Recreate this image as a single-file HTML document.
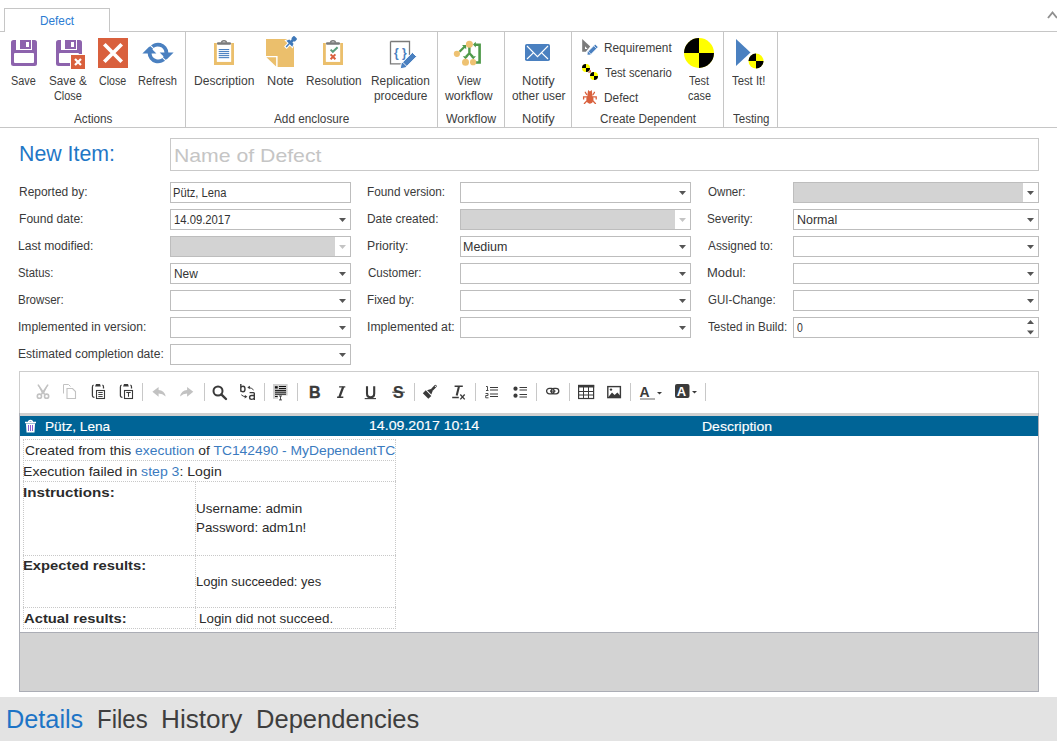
<!DOCTYPE html>
<html><head><meta charset="utf-8"><style>
*{margin:0;padding:0;box-sizing:border-box}
html,body{width:1057px;height:741px;overflow:hidden;background:#fff;font-family:"Liberation Sans",sans-serif;color:#3b3b3b}
.a{position:absolute}
.t{position:absolute;white-space:nowrap;font-size:12px;line-height:12px;color:#3d3d3d}
.hl{position:absolute;height:1px;background:#c6c6c6}
.vl{position:absolute;width:1px;background:#c6c6c6}
.inp{position:absolute;height:21px;border:1px solid #bdbdbd;background:#fff}
.lbl{position:absolute;white-space:nowrap;font-size:12px;line-height:12px;color:#3a3a3a}
.val{position:absolute;white-space:nowrap;font-size:12px;line-height:12px;color:#333}
svg{position:absolute;overflow:visible}
</style></head><body>
<div class="hl" style="left:0;top:31px;width:5px"></div>
<div class="hl" style="left:109px;top:31px;width:948px"></div>
<div class="a" style="left:4px;top:8px;width:106px;height:24px;border:1px solid #c6c6c6;border-bottom:none;background:#fff"></div>
<div class="t" style="left:39.92px;top:14.54px;font-size:12px;line-height:12px;color:#2b7cd3;transform:scaleX(0.9824);transform-origin:0 0;">Defect</div>
<svg style="left:1046px;top:9px" width="11" height="11" viewBox="0 0 11 11"><path d="M2 9 L6.5 3.5 L11 9" fill="none" stroke="#909090" stroke-width="1.9"/></svg>
<div class="hl" style="left:0;top:127px;width:1057px"></div>
<div class="vl" style="left:185px;top:32px;height:95px"></div>
<div class="vl" style="left:437px;top:32px;height:95px"></div>
<div class="vl" style="left:504px;top:32px;height:95px"></div>
<div class="vl" style="left:571px;top:32px;height:95px"></div>
<div class="vl" style="left:723px;top:32px;height:95px"></div>
<div class="vl" style="left:777px;top:32px;height:95px"></div>
<div class="t" style="left:11.49px;top:74.84px;font-size:12px;line-height:12px;transform:scaleX(0.9077);transform-origin:0 0;">Save</div>
<div class="t" style="left:49.03px;top:74.84px;font-size:12px;line-height:12px;transform:scaleX(0.9737);transform-origin:0 0;">Save &amp;</div>
<div class="t" style="left:54.30px;top:89.84px;font-size:12px;line-height:12px;transform:scaleX(0.9065);transform-origin:0 0;">Close</div>
<div class="t" style="left:99.20px;top:74.84px;font-size:12px;line-height:12px;transform:scaleX(0.8871);transform-origin:0 0;">Close</div>
<div class="t" style="left:138.38px;top:74.84px;font-size:12px;line-height:12px;transform:scaleX(0.9244);transform-origin:0 0;">Refresh</div>
<div class="t" style="left:74.00px;top:112.84px;font-size:12px;line-height:12px;transform:scaleX(0.9744);transform-origin:0 0;">Actions</div>
<div class="t" style="left:193.59px;top:74.84px;font-size:12px;line-height:12px;transform:scaleX(1.0068);transform-origin:0 0;">Description</div>
<div class="t" style="left:266.54px;top:74.84px;font-size:12px;line-height:12px;transform:scaleX(1.0583);transform-origin:0 0;">Note</div>
<div class="t" style="left:306.02px;top:74.84px;font-size:12px;line-height:12px;transform:scaleX(0.9818);transform-origin:0 0;">Resolution</div>
<div class="t" style="left:370.61px;top:74.84px;font-size:12px;line-height:12px;transform:scaleX(0.9897);transform-origin:0 0;">Replication</div>
<div class="t" style="left:373.60px;top:89.84px;font-size:12px;line-height:12px;transform:scaleX(0.9889);transform-origin:0 0;">procedure</div>
<div class="t" style="left:274.40px;top:112.84px;font-size:12px;line-height:12px;transform:scaleX(0.9818);transform-origin:0 0;">Add enclosure</div>
<div class="t" style="left:457.00px;top:74.84px;font-size:12px;line-height:12px;transform:scaleX(0.9231);transform-origin:0 0;">View</div>
<div class="t" style="left:445.00px;top:89.84px;font-size:12px;line-height:12px;transform:scaleX(1.0213);transform-origin:0 0;">workflow</div>
<div class="t" style="left:446.00px;top:112.84px;font-size:12px;line-height:12px;transform:scaleX(1.0204);transform-origin:0 0;">Workflow</div>
<div class="t" style="left:521.93px;top:74.84px;font-size:12px;line-height:12px;transform:scaleX(1.0667);transform-origin:0 0;">Notify</div>
<div class="t" style="left:512.00px;top:89.84px;font-size:12px;line-height:12px;transform:scaleX(0.9907);transform-origin:0 0;">other user</div>
<div class="t" style="left:521.93px;top:112.84px;font-size:12px;line-height:12px;transform:scaleX(1.0667);transform-origin:0 0;">Notify</div>
<div class="t" style="left:604.01px;top:41.84px;font-size:12px;line-height:12px;transform:scaleX(0.9853);transform-origin:0 0;">Requirement</div>
<div class="t" style="left:605.00px;top:66.84px;font-size:12px;line-height:12px;transform:scaleX(0.9437);transform-origin:0 0;">Test scenario</div>
<div class="t" style="left:604.01px;top:91.84px;font-size:12px;line-height:12px;transform:scaleX(0.9882);transform-origin:0 0;">Defect</div>
<div class="t" style="left:689.00px;top:74.84px;font-size:12px;line-height:12px;transform:scaleX(0.9091);transform-origin:0 0;">Test</div>
<div class="t" style="left:688.00px;top:89.84px;font-size:12px;line-height:12px;transform:scaleX(0.9040);transform-origin:0 0;">case</div>
<div class="t" style="left:600.00px;top:112.84px;font-size:12px;line-height:12px;transform:scaleX(0.9796);transform-origin:0 0;">Create Dependent</div>
<div class="t" style="left:732.00px;top:74.84px;font-size:12px;line-height:12px;transform:scaleX(0.9429);transform-origin:0 0;">Test It!</div>
<div class="t" style="left:732.60px;top:112.84px;font-size:12px;line-height:12px;transform:scaleX(0.9579);transform-origin:0 0;">Testing</div>
<svg style="left:11px;top:40px" width="26" height="26" viewBox="0 0 26 26"><rect x="0" y="0" width="26" height="26" rx="2.5" fill="#8d63ad"/><rect x="5" y="0" width="16" height="10" fill="#fff"/><rect x="9" y="0" width="11" height="9" fill="#8d63ad"/><rect x="15" y="2" width="3" height="5" fill="#fff"/><rect x="3" y="13" width="20" height="10" rx="1" fill="#fff"/></svg>
<svg style="left:56px;top:40px" width="30" height="30" viewBox="0 0 30 30"><rect x="0" y="0" width="26" height="26" rx="2.5" fill="#8d63ad"/><rect x="5" y="0" width="16" height="10" fill="#fff"/><rect x="9" y="0" width="11" height="9" fill="#8d63ad"/><rect x="15" y="2" width="3" height="5" fill="#fff"/><rect x="3" y="13" width="20" height="10" rx="1" fill="#fff"/><rect x="14" y="14" width="16" height="16" fill="#fff"/><rect x="15" y="15" width="14" height="14" fill="#d9603d"/><path d="M19 19 L25 25 M25 19 L19 25" stroke="#fff" stroke-width="2.2"/></svg>
<svg style="left:98px;top:38px" width="30" height="30" viewBox="0 0 30 30"><rect width="30" height="30" fill="#d9603d"/><path d="M6.3 6.3 L23.7 23.7 M23.7 6.3 L6.3 23.7" stroke="#fff" stroke-width="3.7"/></svg>
<svg style="left:140px;top:40px" width="36" height="26" viewBox="0 0 36 26"><path d="M10.73 8.80 A8.4 8.4 0 0 1 26.40 13.00" fill="none" stroke="#4a80c0" stroke-width="3.9"/><path d="M25.27 17.20 A8.4 8.4 0 0 1 9.60 13.00" fill="none" stroke="#4a80c0" stroke-width="3.9"/><path d="M19.7 12.6 L33.6 12.6 L26.6 19.6 Z" fill="#4a80c0"/><path d="M2.4 13.4 L16.4 13.4 L9.4 6.5 Z" fill="#4a80c0"/><path d="M15.17 10.17 L8.81 3.81 M20.83 15.83 L27.19 22.19" stroke="#fff" stroke-width="1.1"/></svg>
<svg style="left:214px;top:40px" width="20" height="26" viewBox="0 0 20 26"><path d="M0 3 H2.9 V21.7 H17.1 V3 H20 V25 H0 Z" fill="#ebbf6c"/><rect x="2.9" y="3" width="14.2" height="18.7" fill="#fff"/><rect x="3" y="2.2" width="14" height="2.6" rx="1.1" fill="#7b7b7b"/><path d="M7.6 2.8 Q7.6 0.7 10 0.7 Q12.4 0.7 12.4 2.8" fill="none" stroke="#7b7b7b" stroke-width="1.5"/><rect x="4.7" y="9.00" width="10.5" height="1.1" fill="#4a80c0"/><rect x="4.7" y="11.02" width="10.5" height="1.1" fill="#4a80c0"/><rect x="4.7" y="13.04" width="10.5" height="1.1" fill="#4a80c0"/><rect x="4.7" y="15.06" width="10.5" height="1.1" fill="#4a80c0"/><rect x="4.7" y="17.08" width="10.5" height="1.1" fill="#4a80c0"/></svg>
<svg style="left:262px;top:34px" width="38" height="36" viewBox="0 0 38 36"><path d="M4 5 H32 V33 H15.6 V22 H4 Z" fill="#ebbf6c"/><path d="M4.4 23.3 H14.1 V32.6 Z" fill="#ebbf6c"/><g transform="rotate(45 28 9)"><rect x="25.6" y="1" width="4.8" height="4" rx="1" fill="#fff" stroke="#fff" stroke-width="2.2"/><rect x="26.6" y="4.5" width="2.8" height="3" fill="#fff" stroke="#fff" stroke-width="2.2"/><path d="M23.8 10 L25 7 H31 L32.2 10 Z" fill="#fff" stroke="#fff" stroke-width="2.2"/><rect x="27.3" y="9.5" width="1.4" height="5" fill="#fff" stroke="#fff" stroke-width="2.2"/></g><g transform="rotate(45 28 9)"><rect x="25.6" y="1" width="4.8" height="4" rx="1" fill="#3f78b8" stroke="none" stroke-width="0"/><rect x="26.6" y="4.5" width="2.8" height="3" fill="#3f78b8" stroke="none" stroke-width="0"/><path d="M23.8 10 L25 7 H31 L32.2 10 Z" fill="#3f78b8" stroke="none" stroke-width="0"/><rect x="27.3" y="9.5" width="1.4" height="5" fill="#3f78b8" stroke="none" stroke-width="0"/></g></svg>
<svg style="left:323px;top:40px" width="20" height="26" viewBox="0 0 20 26"><path d="M0 3 H2.9 V21.7 H17.1 V3 H20 V25 H0 Z" fill="#ebbf6c"/><rect x="2.9" y="3" width="14.2" height="18.7" fill="#fff"/><rect x="3" y="2.2" width="14" height="2.6" rx="1.1" fill="#7b7b7b"/><path d="M7.6 2.8 Q7.6 0.7 10 0.7 Q12.4 0.7 12.4 2.8" fill="none" stroke="#7b7b7b" stroke-width="1.5"/><path d="M7.6 9.6 L9.8 11.8 L14.6 7.2" fill="none" stroke="#5a9e7c" stroke-width="2"/><path d="M7.6 14.4 L12.4 19.2 M12.4 14.4 L7.6 19.2" stroke="#d9603d" stroke-width="2"/></svg>
<svg style="left:389px;top:40px" width="28" height="30" viewBox="0 0 28 30"><path d="M1.5 1.5 H20.5 V15 M12 23.8 H1.5 V1.5" fill="none" stroke="#7a7a7a" stroke-width="1.3"/><text x="5" y="17" font-family="Liberation Sans" font-weight="bold" font-size="12" fill="#4a80c0">{ }</text><path d="M11.2 28.8 L12.2 23.6 L23.4 12.4 L27.6 16.6 L16.4 27.8 Z" fill="#4a80c0" stroke="#fff" stroke-width="1"/><path d="M13.6 22.2 L17.8 26.4" stroke="#fff" stroke-width="0.9"/></svg>
<svg style="left:450px;top:37px" width="36" height="32" viewBox="0 0 36 32"><path d="M9.5 14.8 L15 9.3" stroke="#4f9a4a" stroke-width="2.3"/><path d="M12 8.1 L16.2 8.1 L16.2 12.2 Z" fill="#4f9a4a"/><path d="M19.4 10 V16.5 M19.4 16.2 L16 19.8 M19.4 16.2 L22.8 19.8" stroke="#4f9a4a" stroke-width="2.4" fill="none"/><path d="M12.8 19.3 L18.3 19.3 L15.5 22.2 Z M20.5 19.3 L26 19.3 L23.2 22.2 Z" fill="#4f9a4a"/><path d="M25.5 25.5 H29.6 V7.8 H24.5" fill="none" stroke="#4f9a4a" stroke-width="2.6"/><path d="M23 7.6 L25.8 4.8 L25.8 10.4 Z" fill="#4f9a4a"/><circle cx="6.9" cy="16.8" r="3.1" fill="#eec272"/><circle cx="19.4" cy="7.3" r="3.5" fill="#eec272"/><circle cx="15.5" cy="25.2" r="3.5" fill="#eec272"/><circle cx="23.1" cy="25.2" r="3.1" fill="#eec272"/></svg>
<svg style="left:525px;top:44px" width="25" height="17" viewBox="0 0 25 17"><rect width="25" height="17" rx="1.8" fill="#4a80c0"/><path d="M2 2 L12.5 12.6 L23 2 M2 15 L8.6 8.6 M23 15 L16.4 8.6" fill="none" stroke="#fff" stroke-width="1.15"/></svg>
<svg style="left:578px;top:36px" width="24" height="22" viewBox="0 0 24 22"><path d="M4.2 3 L12.2 10.4 L7.8 15.7 H4.2 Z" fill="#7b7b7b"/><path d="M7 10.3 L9.6 13 H7 Z" fill="#fff"/><path d="M9.1 19.1 L9.4 16.1 L17.3 8.2 L20.2 11.1 L12.3 19 Z" fill="#4a80c0" stroke="#fff" stroke-width="0.7"/><path d="M15.8 9.8 L18.6 12.6 M10.2 15.4 L13 18.2" stroke="#fff" stroke-width="0.7"/></svg>
<svg style="left:580px;top:62px" width="20" height="20" viewBox="0 0 20 20"><circle cx="6" cy="6" r="4.9" fill="#fff"/><circle cx="14" cy="14" r="4.9" fill="#fff"/><circle cx="6" cy="6" r="4" fill="#ffff00"/><path d="M6 6 V2 A4 4 0 0 0 2 6 Z" fill="#000"/><path d="M6 6 V10 A4 4 0 0 0 10 6 Z" fill="#000"/><path d="M7.8 10.8 L11 7.8 L11 10.6 Z" fill="#d9603d"/><circle cx="14" cy="14" r="4" fill="#ffff00"/><path d="M14 14 V10 A4 4 0 0 0 10 14 Z" fill="#000"/><path d="M14 14 V18 A4 4 0 0 0 18 14 Z" fill="#000"/></svg>
<svg style="left:578px;top:86px" width="24" height="22" viewBox="0 0 24 22"><ellipse cx="11.9" cy="13.1" rx="3.6" ry="4.6" fill="#d9603d"/><path d="M9.3 9.6 L10.1 3.9 L11.9 5.6 L13.7 3.9 L14.5 9.6 Z" fill="#d9603d"/><path d="M9 9 L7.4 6.6 V5.8 M14.8 9 L16.4 6.6 V5.8 M9 10.8 H5.6 V13.6 M14.8 10.8 H18.2 V13.6 M9 14.8 L6.4 17.5 V18 M14.8 14.8 L17.4 17.5 V18" fill="none" stroke="#d9603d" stroke-width="1.3"/></svg>
<svg style="left:684px;top:38px" width="30" height="30" viewBox="0 0 30 30"><circle cx="15" cy="15" r="15" fill="#ffff00"/><path d="M15 15 V0 A15 15 0 0 0 0 15 Z" fill="#000"/><path d="M15 15 V30 A15 15 0 0 0 30 15 Z" fill="#000"/></svg>
<svg style="left:735px;top:38px" width="30" height="32" viewBox="0 0 30 32"><path d="M1 1 L15.5 14.5 L1 28 Z" fill="#4a80c0"/><circle cx="21" cy="23" r="8.3" fill="#fff"/><circle cx="21" cy="23" r="7.5" fill="#ffff00"/><path d="M21 23 V15.5 A7.5 7.5 0 0 0 13.5 23 Z" fill="#000"/><path d="M21 23 V30.5 A7.5 7.5 0 0 0 28.5 23 Z" fill="#000"/></svg>
<div class="t" style="left:19.03px;top:143.38px;font-size:22px;line-height:22px;color:#1f77c6;transform:scaleX(0.9691);transform-origin:0 0;">New Item:</div>
<div class="a" style="left:170px;top:138px;width:869px;height:33px;border:1px solid #c9c9c9"></div>
<div class="t" style="left:174.38px;top:146.22px;font-size:19px;line-height:19px;color:#c5c5c5;transform:scaleX(1.1168);transform-origin:0 0;">Name of Defect</div>
<div class="lbl" style="left:18.60px;top:185.84px;font-size:12px;line-height:12px;transform:scaleX(0.9970);transform-origin:0 0;">Reported by:</div>
<div class="inp" style="left:170px;top:182px;width:181px"></div>
<div class="val" style="left:173.47px;top:186.84px;font-size:12px;line-height:12px;transform:scaleX(0.9298);transform-origin:0 0;">Pütz, Lena</div>
<div class="lbl" style="left:18.59px;top:212.84px;font-size:12px;line-height:12px;transform:scaleX(1.0065);transform-origin:0 0;">Found date:</div>
<div class="inp" style="left:170px;top:209px;width:181px"></div>
<svg style="left:339px;top:218px" width="7" height="4" viewBox="0 0 7 4"><path d="M0 0 H7 L3.5 4 Z" fill="#555"/></svg>
<div class="val" style="left:174.06px;top:213.84px;font-size:12px;line-height:12px;transform:scaleX(0.9390);transform-origin:0 0;">14.09.2017</div>
<div class="lbl" style="left:18.39px;top:239.84px;font-size:12px;line-height:12px;transform:scaleX(1.0096);transform-origin:0 0;">Last modified:</div>
<div class="inp" style="left:170px;top:236px;width:181px"></div>
<div class="a" style="left:171px;top:237px;width:164px;height:19px;background:#d3d3d3"></div>
<svg style="left:339px;top:245px" width="7" height="4" viewBox="0 0 7 4"><path d="M0 0 H7 L3.5 4 Z" fill="#c4c4c4"/></svg>
<div class="lbl" style="left:18.46px;top:266.84px;font-size:12px;line-height:12px;transform:scaleX(0.9444);transform-origin:0 0;">Status:</div>
<div class="inp" style="left:170px;top:263px;width:181px"></div>
<svg style="left:339px;top:272px" width="7" height="4" viewBox="0 0 7 4"><path d="M0 0 H7 L3.5 4 Z" fill="#555"/></svg>
<div class="val" style="left:173.71px;top:267.84px;font-size:12px;line-height:12px;transform:scaleX(0.9913);transform-origin:0 0;">New</div>
<div class="lbl" style="left:18.43px;top:293.84px;font-size:12px;line-height:12px;transform:scaleX(0.9652);transform-origin:0 0;">Browser:</div>
<div class="inp" style="left:170px;top:290px;width:181px"></div>
<svg style="left:339px;top:299px" width="7" height="4" viewBox="0 0 7 4"><path d="M0 0 H7 L3.5 4 Z" fill="#555"/></svg>
<div class="lbl" style="left:18.39px;top:320.84px;font-size:12px;line-height:12px;transform:scaleX(1.0079);transform-origin:0 0;">Implemented in version:</div>
<div class="inp" style="left:170px;top:317px;width:181px"></div>
<svg style="left:339px;top:326px" width="7" height="4" viewBox="0 0 7 4"><path d="M0 0 H7 L3.5 4 Z" fill="#555"/></svg>
<div class="lbl" style="left:18.39px;top:347.84px;font-size:12px;line-height:12px;transform:scaleX(1.0070);transform-origin:0 0;">Estimated completion date:</div>
<div class="inp" style="left:170px;top:344px;width:181px"></div>
<svg style="left:339px;top:353px" width="7" height="4" viewBox="0 0 7 4"><path d="M0 0 H7 L3.5 4 Z" fill="#555"/></svg>
<div class="lbl" style="left:366.82px;top:185.84px;font-size:12px;line-height:12px;transform:scaleX(0.9833);transform-origin:0 0;">Found version:</div>
<div class="inp" style="left:460px;top:182px;width:231px"></div>
<svg style="left:679px;top:191px" width="7" height="4" viewBox="0 0 7 4"><path d="M0 0 H7 L3.5 4 Z" fill="#555"/></svg>
<div class="lbl" style="left:366.81px;top:212.84px;font-size:12px;line-height:12px;transform:scaleX(0.9929);transform-origin:0 0;">Date created:</div>
<div class="inp" style="left:460px;top:209px;width:231px"></div>
<div class="a" style="left:461px;top:210px;width:214px;height:19px;background:#d3d3d3"></div>
<svg style="left:679px;top:218px" width="7" height="4" viewBox="0 0 7 4"><path d="M0 0 H7 L3.5 4 Z" fill="#c4c4c4"/></svg>
<div class="lbl" style="left:366.68px;top:239.84px;font-size:12px;line-height:12px;transform:scaleX(1.0179);transform-origin:0 0;">Priority:</div>
<div class="inp" style="left:460px;top:236px;width:231px"></div>
<svg style="left:679px;top:245px" width="7" height="4" viewBox="0 0 7 4"><path d="M0 0 H7 L3.5 4 Z" fill="#555"/></svg>
<div class="val" style="left:463.46px;top:240.84px;font-size:12px;line-height:12px;transform:scaleX(1.0415);transform-origin:0 0;">Medium</div>
<div class="lbl" style="left:367.70px;top:266.84px;font-size:12px;line-height:12px;transform:scaleX(0.9655);transform-origin:0 0;">Customer:</div>
<div class="inp" style="left:460px;top:263px;width:231px"></div>
<svg style="left:679px;top:272px" width="7" height="4" viewBox="0 0 7 4"><path d="M0 0 H7 L3.5 4 Z" fill="#555"/></svg>
<div class="lbl" style="left:366.73px;top:293.84px;font-size:12px;line-height:12px;transform:scaleX(0.9723);transform-origin:0 0;">Fixed by:</div>
<div class="inp" style="left:460px;top:290px;width:231px"></div>
<svg style="left:679px;top:299px" width="7" height="4" viewBox="0 0 7 4"><path d="M0 0 H7 L3.5 4 Z" fill="#555"/></svg>
<div class="lbl" style="left:366.68px;top:320.84px;font-size:12px;line-height:12px;transform:scaleX(1.0190);transform-origin:0 0;">Implemented at:</div>
<div class="inp" style="left:460px;top:317px;width:231px"></div>
<svg style="left:679px;top:326px" width="7" height="4" viewBox="0 0 7 4"><path d="M0 0 H7 L3.5 4 Z" fill="#555"/></svg>
<div class="lbl" style="left:707.60px;top:185.84px;font-size:12px;line-height:12px;transform:scaleX(0.9658);transform-origin:0 0;">Owner:</div>
<div class="inp" style="left:793px;top:182px;width:246px"></div>
<div class="a" style="left:794px;top:183px;width:229px;height:19px;background:#d3d3d3"></div>
<svg style="left:1027px;top:191px" width="7" height="4" viewBox="0 0 7 4"><path d="M0 0 H7 L3.5 4 Z" fill="#555"/></svg>
<div class="lbl" style="left:706.62px;top:212.84px;font-size:12px;line-height:12px;transform:scaleX(0.9822);transform-origin:0 0;">Severity:</div>
<div class="inp" style="left:793px;top:209px;width:246px"></div>
<svg style="left:1027px;top:218px" width="7" height="4" viewBox="0 0 7 4"><path d="M0 0 H7 L3.5 4 Z" fill="#555"/></svg>
<div class="val" style="left:796.56px;top:213.84px;font-size:12px;line-height:12px;transform:scaleX(1.0405);transform-origin:0 0;">Normal</div>
<div class="lbl" style="left:707.60px;top:239.84px;font-size:12px;line-height:12px;transform:scaleX(0.9862);transform-origin:0 0;">Assigned to:</div>
<div class="inp" style="left:793px;top:236px;width:246px"></div>
<svg style="left:1027px;top:245px" width="7" height="4" viewBox="0 0 7 4"><path d="M0 0 H7 L3.5 4 Z" fill="#555"/></svg>
<div class="lbl" style="left:706.52px;top:266.84px;font-size:12px;line-height:12px;transform:scaleX(1.0794);transform-origin:0 0;">Modul:</div>
<div class="inp" style="left:793px;top:263px;width:246px"></div>
<svg style="left:1027px;top:272px" width="7" height="4" viewBox="0 0 7 4"><path d="M0 0 H7 L3.5 4 Z" fill="#555"/></svg>
<div class="lbl" style="left:707.60px;top:293.84px;font-size:12px;line-height:12px;transform:scaleX(0.9557);transform-origin:0 0;">GUI-Change:</div>
<div class="inp" style="left:793px;top:290px;width:246px"></div>
<svg style="left:1027px;top:299px" width="7" height="4" viewBox="0 0 7 4"><path d="M0 0 H7 L3.5 4 Z" fill="#555"/></svg>
<div class="lbl" style="left:707.60px;top:320.84px;font-size:12px;line-height:12px;transform:scaleX(0.9728);transform-origin:0 0;">Tested in Build:</div>
<div class="inp" style="left:793px;top:317px;width:246px"></div>
<svg style="left:1027px;top:320px" width="7" height="16" viewBox="0 0 7 16"><path d="M0 4 H7 L3.5 0 Z M0 10.5 H7 L3.5 14.5 Z" fill="#555"/></svg>
<div class="val" style="left:797.20px;top:321.84px;font-size:12px;line-height:12px;transform:scaleX(0.8714);transform-origin:0 0;">0</div>
<div class="a" style="left:19px;top:371px;width:1020px;height:321px;border:1px solid #cdcdcd;background:#fff"></div>
<div class="a" style="left:19px;top:413px;width:1020px;height:279px;border:1px solid #abadb5;border-top:none"></div>
<div class="a" style="left:20px;top:413px;width:1018px;height:3px;background:#d0d0d0"></div>
<div class="a" style="left:20px;top:416px;width:1018px;height:20px;background:#006496"></div>
<div class="a" style="left:20px;top:632px;width:1018px;height:59px;background:#d3d3d3;border-top:1px solid #abadb5"></div>
<div class="a" style="left:142px;top:383px;width:1px;height:18px;background:#c8c8c8"></div>
<div class="a" style="left:264px;top:383px;width:1px;height:18px;background:#c8c8c8"></div>
<div class="a" style="left:297px;top:383px;width:1px;height:18px;background:#c8c8c8"></div>
<div class="a" style="left:414px;top:383px;width:1px;height:18px;background:#c8c8c8"></div>
<div class="a" style="left:475px;top:383px;width:1px;height:18px;background:#c8c8c8"></div>
<div class="a" style="left:536px;top:383px;width:1px;height:18px;background:#c8c8c8"></div>
<div class="a" style="left:569px;top:383px;width:1px;height:18px;background:#c8c8c8"></div>
<div class="a" style="left:630px;top:383px;width:1px;height:18px;background:#c8c8c8"></div>
<div class="a" style="left:705px;top:383px;width:1px;height:18px;background:#c8c8c8"></div>
<div class="a" style="left:204px;top:383px;width:1px;height:18px;background:#c8c8c8"></div>
<svg style="left:36px;top:384px" width="14" height="15" viewBox="0 0 14 15"><path d="M1.6 0.3 L7.8 9 L6.4 10.2 Z M12.4 0.3 L6.2 9 L7.6 10.2 Z" fill="#c2c2c2"/><path d="M2 0.6 L8.6 10.4 M12 0.6 L5.4 10.4" stroke="#c2c2c2" stroke-width="1.6"/><circle cx="3.4" cy="12.2" r="2.1" fill="none" stroke="#c2c2c2" stroke-width="1.6"/><circle cx="10.6" cy="12.2" r="2.1" fill="none" stroke="#c2c2c2" stroke-width="1.6"/></svg>
<svg style="left:63px;top:384px" width="14" height="15" viewBox="0 0 14 15"><path d="M0.5 9.5 V0.5 H5.5 L7.5 2.5" fill="none" stroke="#c2c2c2" stroke-width="1"/><path d="M4 4.5 H9.5 L12.5 7.5 V14.5 H4 Z" fill="none" stroke="#c2c2c2" stroke-width="1.1"/></svg>
<svg style="left:88px;top:380px" width="50" height="22" viewBox="0 0 50 22"><g transform="translate(0 0)"><path d="M5.6 5.2 Q4.4 5.4 4.4 7 V15.6 Q4.4 17.4 6.4 17.4" fill="none" stroke="#3a3a3a" stroke-width="1.25"/><path d="M14.4 5.2 Q15.5 5.4 15.5 7 V8.6" fill="none" stroke="#3a3a3a" stroke-width="1.25"/><path d="M7.1 6.6 L8 4 H12 L12.8 6.6 Z" fill="#3a3a3a"/><rect x="8.5" y="10.5" width="8" height="8" fill="none" stroke="#3a3a3a" stroke-width="1.1"/><path d="M10.3 12.5 H14.7 M10.3 14.5 H14.7 M10.3 16.5 H14.7" stroke="#3a3a3a" stroke-width="0.95"/></g><g transform="translate(28 0)"><path d="M5.6 5.2 Q4.4 5.4 4.4 7 V15.6 Q4.4 17.4 6.4 17.4" fill="none" stroke="#3a3a3a" stroke-width="1.25"/><path d="M14.4 5.2 Q15.5 5.4 15.5 7 V8.6" fill="none" stroke="#3a3a3a" stroke-width="1.25"/><path d="M7.1 6.6 L8 4 H12 L12.8 6.6 Z" fill="#3a3a3a"/><rect x="8.5" y="10.5" width="8" height="8" fill="none" stroke="#3a3a3a" stroke-width="1.1"/><path d="M10.3 12.5 H14.7 M12.5 12.5 V16.8" stroke="#3a3a3a" stroke-width="1.05"/></g></svg>
<svg style="left:148px;top:382px" width="52" height="20" viewBox="0 0 52 20"><path d="M4.4 9.8 L10.6 4.9 V8 Q16.3 8 17.7 14.6 Q14.5 11.6 10.6 11.6 V14.8 Z" fill="#c2c2c2"/><path d="M45.3 9.8 L39.1 4.9 V8 Q33.4 8 32 14.6 Q35.2 11.6 39.1 11.6 V14.8 Z" fill="#c2c2c2"/></svg>
<svg style="left:212px;top:385px" width="16" height="16" viewBox="0 0 16 16"><circle cx="6" cy="6" r="4.5" fill="none" stroke="#3a3a3a" stroke-width="2"/><path d="M9.3 9.3 L14 14" stroke="#3a3a3a" stroke-width="2.4" stroke-linecap="round"/></svg>
<svg style="left:234px;top:380px" width="30" height="24" viewBox="0 0 30 24"><path d="M6.8 4 V11.8 M6.8 7.8 Q7.2 6.3 9 6.3 Q11 6.3 11 9 Q11 11.8 9 11.8 Q7.2 11.8 6.8 10.5" fill="none" stroke="#3a3a3a" stroke-width="1.4"/><path d="M15.6 12.6 H19.5 Q20.3 12.6 20.3 13.6 V19.9 M20.3 15.5 H17.5 Q15.6 15.5 15.6 17.6 Q15.6 19.4 17.5 19.4 Q19.5 19.4 20.3 18" fill="none" stroke="#3a3a3a" stroke-width="1.4"/><path d="M19.6 10 Q18 8 15 7.6" fill="none" stroke="#3a3a3a" stroke-width="1"/><path d="M13.3 7.3 L16 5.8 L15.6 9.2 Z" fill="#3a3a3a"/><path d="M7.3 14.8 Q9 16.6 11.5 16.6" fill="none" stroke="#3a3a3a" stroke-width="1"/><path d="M13.4 16.8 L10.6 18.5 L11 15 Z" fill="#3a3a3a"/></svg>
<svg style="left:273px;top:384px" width="16" height="16" viewBox="0 0 16 16"><path d="M0 0 H14.6 V11.6 H5 V14.7 H0 Z" fill="#cfcfcf"/><rect x="1.9" y="2.2" width="2.8" height="2.3" fill="#111"/><path d="M6 2.5 H13 M6 4.5 H13 M2 6.4 H13 M2 8.2 H13 M2 10.2 H13 M2 12.5 H4.7" stroke="#111" stroke-width="1"/><path d="M6 12 H9 M7.5 12 V15.9 M6 15.9 H9" stroke="#3a3a3a" stroke-width="0.9"/></svg>
<svg style="left:304px;top:380px" width="106" height="24" viewBox="0 0 106 24"><text x="5" y="17.9" font-family="Liberation Sans" font-weight="bold" font-size="16" fill="#3a3a3a" stroke="#3a3a3a" stroke-width="0.35">B</text><path d="M35.1 6.9 H41.3 M33.1 17.2 H39.3" stroke="#3a3a3a" stroke-width="1.4"/><path d="M39.2 6.9 L35.4 17.2" stroke="#3a3a3a" stroke-width="2.3"/><path d="M63 6.2 V13.4 Q63 17.2 66.6 17.2 Q70.2 17.2 70.2 13.4 V6.2" fill="none" stroke="#3a3a3a" stroke-width="2.1"/><path d="M60.7 18.6 H72" stroke="#3a3a3a" stroke-width="1.1"/><text x="89" y="17.9" font-family="Liberation Sans" font-weight="bold" font-size="16" fill="#3a3a3a" stroke="#3a3a3a" stroke-width="0.2">S</text><path d="M88.3 12.2 H100.8" stroke="#3a3a3a" stroke-width="1.1"/></svg>
<svg style="left:418px;top:380px" width="52" height="24" viewBox="0 0 52 24"><g transform="translate(13 10.65) rotate(45)"><rect x="-3.9" y="3.5" width="7.8" height="4.2" fill="#3a3a3a"/><path d="M-3 2.6 H3 L1.3 -1.2 H-1.3 Z" fill="#3a3a3a"/><rect x="-1.3" y="-7.6" width="2.6" height="7" rx="1.3" fill="#3a3a3a"/><circle cx="0" cy="-6.2" r="0.6" fill="#fff"/></g><path d="M36.6 6.2 H44.8 M34.2 17.5 H40.8" stroke="#3a3a3a" stroke-width="1.5"/><path d="M41 6.2 L38.7 15.6" stroke="#3a3a3a" stroke-width="2.1"/><path d="M42.3 14.5 L46.7 19.4 M46.7 14.5 L42.3 19.4" stroke="#3a3a3a" stroke-width="1.3"/></svg>
<svg style="left:485px;top:386px" width="14" height="14" viewBox="0 0 14 14"><path d="M1 0.5 H2.5 V4.5 M1 4.5 H3.5" fill="none" stroke="#3a3a3a" stroke-width="0.9"/><path d="M0.5 7.5 H3 V9.5 H0.7 V11.8 H3.5" fill="none" stroke="#3a3a3a" stroke-width="0.9"/><path d="M5 1.5 H13 M5 4 H13 M5 8 H13 M5 10.5 H13" stroke="#3a3a3a" stroke-width="1.2"/></svg>
<svg style="left:513px;top:386px" width="15" height="14" viewBox="0 0 15 14"><circle cx="2.5" cy="2.7" r="2.1" fill="#3a3a3a"/><circle cx="2.5" cy="9.7" r="2.1" fill="#3a3a3a"/><path d="M6.5 1.5 H14 M6.5 4 H14 M6.5 8.5 H14 M6.5 11 H14" stroke="#3a3a3a" stroke-width="1.2"/></svg>
<svg style="left:545px;top:386px" width="16" height="10" viewBox="0 0 16 10"><rect x="1.6" y="2.3" width="7.6" height="5.6" rx="2.8" fill="none" stroke="#3a3a3a" stroke-width="1.3"/><rect x="6.2" y="2.3" width="7.6" height="5.6" rx="2.8" fill="none" stroke="#3a3a3a" stroke-width="1.3"/><path d="M5 5.1 H10.5" stroke="#3a3a3a" stroke-width="1.2"/></svg>
<svg style="left:578px;top:384px" width="17" height="16" viewBox="0 0 17 16"><rect x="0.6" y="1.5" width="15" height="13" fill="none" stroke="#3a3a3a" stroke-width="1.2"/><rect x="0" y="0.9" width="16.2" height="2.6" fill="#3a3a3a"/><path d="M0.6 7.5 H15.6 M0.6 11 H15.6 M5.5 3 V14.5 M10.5 3 V14.5" stroke="#3a3a3a" stroke-width="1"/></svg>
<svg style="left:606px;top:385px" width="16" height="14" viewBox="0 0 16 14"><rect x="1.8" y="1.6" width="12.6" height="11" fill="none" stroke="#3a3a3a" stroke-width="1.4"/><circle cx="5" cy="4.6" r="1.2" fill="#3a3a3a"/><path d="M2.2 12.2 L6 7.6 L8.6 10 L11.4 7.4 L14 10.4 V12.2 Z" fill="#3a3a3a"/></svg>
<svg style="left:639px;top:384px" width="24" height="17" viewBox="0 0 24 17"><text x="0.5" y="12.5" font-family="Liberation Sans" font-weight="bold" font-size="14" fill="#3a3a3a">A</text><path d="M1 15 H16" stroke="#a0a0a0" stroke-width="1.6"/><path d="M18 8 H23 L20.5 10.5 Z" fill="#3a3a3a"/></svg>
<svg style="left:675px;top:384px" width="24" height="16" viewBox="0 0 24 16"><rect x="0" y="0" width="14.5" height="14" rx="2" fill="#3a3a3a"/><text x="1.8" y="12" font-family="Liberation Sans" font-weight="bold" font-size="13" fill="#fff">A</text><path d="M17 7 H22 L19.5 9.5 Z" fill="#3a3a3a"/></svg>
<svg style="left:24px;top:420px" width="14" height="13" viewBox="0 0 14 13"><path d="M1 2.5 H12 M4.5 2.5 Q4.5 0.5 6.5 0.5 Q8.5 0.5 8.5 2.5" fill="none" stroke="#fff" stroke-width="1.4"/><path d="M2 3.5 H11 L10.5 12.5 H2.5 Z" fill="#fff"/><path d="M4.5 5 V11 M6.5 5 V11 M8.5 5 V11" stroke="#8a5fcf" stroke-width="1"/></svg>
<div class="t" style="left:44.99px;top:419.57px;font-size:13.5px;line-height:13.5px;-webkit-text-stroke:0.15px #fff;color:#fff;transform:scaleX(1.0094);transform-origin:0 0;">Pütz, Lena</div>
<div class="t" style="left:368.95px;top:419.17px;font-size:13.5px;line-height:13.5px;-webkit-text-stroke:0.15px #fff;color:#fff;transform:scaleX(1.0481);transform-origin:0 0;">14.09.2017 10:14</div>
<div class="t" style="left:702.16px;top:419.57px;font-size:13.5px;line-height:13.5px;-webkit-text-stroke:0.15px #fff;color:#fff;transform:scaleX(1.0364);transform-origin:0 0;">Description</div>
<div class="a" style="left:23px;top:439px;width:373px;height:190px;border:1px dotted #c8c8c8"></div>
<div class="a" style="left:23px;top:460px;width:373px;height:1px;border-top:1px dotted #c8c8c8"></div>
<div class="a" style="left:23px;top:481px;width:373px;height:1px;border-top:1px dotted #c8c8c8"></div>
<div class="a" style="left:23px;top:555px;width:373px;height:1px;border-top:1px dotted #c8c8c8"></div>
<div class="a" style="left:23px;top:607px;width:373px;height:1px;border-top:1px dotted #c8c8c8"></div>
<div class="a" style="left:195px;top:481px;width:1px;height:148px;border-left:1px dotted #c8c8c8"></div>
<div class="t" style="left:24.60px;top:444.00px;font-size:13px;line-height:13px;color:#2b2b2b;transform:scaleX(1.0657);transform-origin:0 0;">Created from this <span style="color:#3b7bbf">execution</span> of <span style="color:#3b7bbf">TC142490 - MyDependentTC</span></div>
<div class="t" style="left:23.32px;top:465.00px;font-size:13px;line-height:13px;color:#2b2b2b;transform:scaleX(1.0824);transform-origin:0 0;">Execution failed in <span style="color:#3b7bbf">step 3</span>: Login</div>
<div class="t" style="left:23.43px;top:485.60px;font-size:13px;line-height:13px;font-weight:bold;color:#2b2b2b;transform:scaleX(1.1662);transform-origin:0 0;">Instructions:</div>
<div class="t" style="left:23.46px;top:558.50px;font-size:13px;line-height:13px;font-weight:bold;color:#2b2b2b;transform:scaleX(1.1358);transform-origin:0 0;">Expected results:</div>
<div class="t" style="left:23.90px;top:611.60px;font-size:13px;line-height:13px;font-weight:bold;color:#2b2b2b;transform:scaleX(1.1360);transform-origin:0 0;">Actual results:</div>
<div class="t" style="left:195.96px;top:502.00px;font-size:13px;line-height:13px;color:#2b2b2b;transform:scaleX(1.0356);transform-origin:0 0;">Username: admin</div>
<div class="t" style="left:195.98px;top:521.00px;font-size:13px;line-height:13px;color:#2b2b2b;transform:scaleX(1.0245);transform-origin:0 0;">Password: adm1n!</div>
<div class="t" style="left:195.60px;top:575.00px;font-size:13px;line-height:13px;color:#2b2b2b;transform:scaleX(0.9952);transform-origin:0 0;">Login succeeded: yes</div>
<div class="t" style="left:198.97px;top:612.00px;font-size:13px;line-height:13px;color:#2b2b2b;transform:scaleX(1.0312);transform-origin:0 0;">Login did not succeed.</div>
<div class="a" style="left:0;top:697px;width:1057px;height:44px;background:#e3e3e3"></div>
<div class="t" style="left:5.58px;top:706.84px;font-size:25px;line-height:25px;color:#1d74c6;transform:scaleX(1.0108);transform-origin:0 0;">Details</div>
<div class="t" style="left:97.08px;top:706.84px;font-size:25px;line-height:25px;color:#3e3e3e;transform:scaleX(0.9600);transform-origin:0 0;">Files</div>
<div class="t" style="left:160.61px;top:706.84px;font-size:25px;line-height:25px;color:#3e3e3e;transform:scaleX(1.0461);transform-origin:0 0;">History</div>
<div class="t" style="left:255.76px;top:706.84px;font-size:25px;line-height:25px;color:#3e3e3e;transform:scaleX(1.0217);transform-origin:0 0;">Dependencies</div>
</body></html>
